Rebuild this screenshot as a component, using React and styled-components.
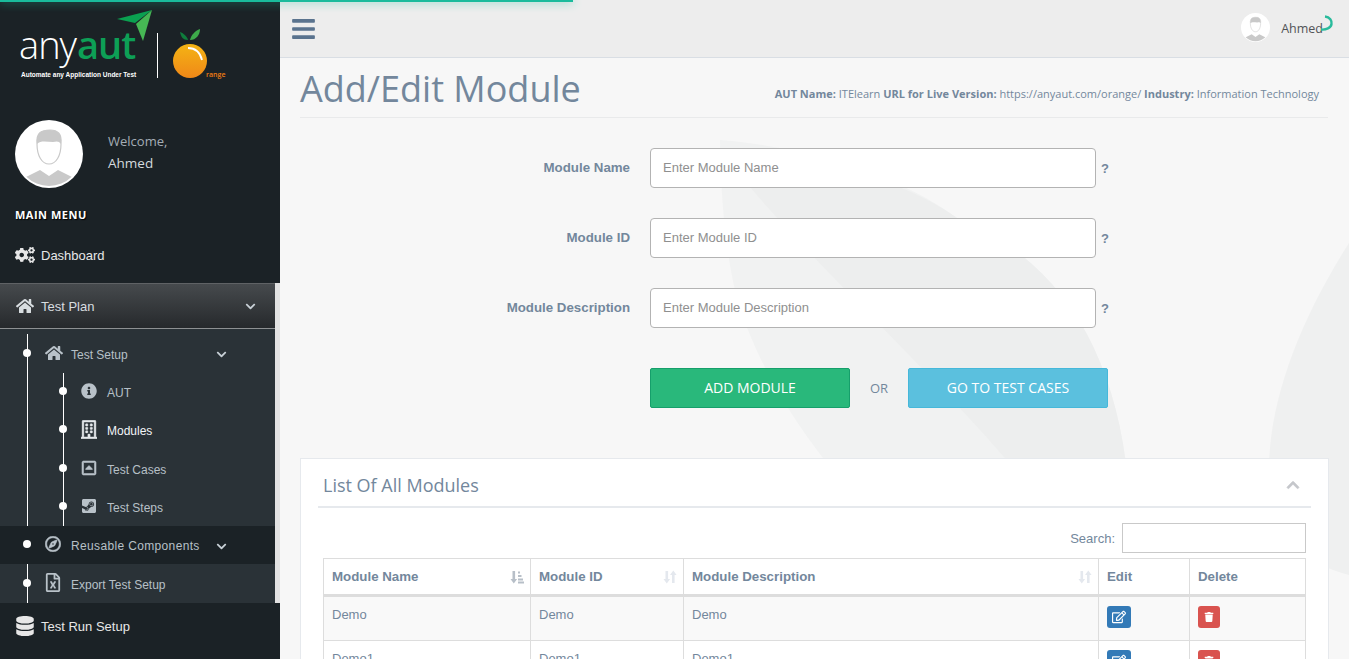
import React from 'react';
import styled, { createGlobalStyle } from 'styled-components';
import {
  FaBars, FaChevronDown, FaChevronUp, FaCogs, FaHome, FaInfoCircle, FaRegBuilding, FaRegCaretSquareUp,
  FaSteamSquare, FaRegCompass, FaRegFileExcel, FaDatabase, FaRegEdit, FaTrash,
} from 'react-icons/fa';

const GlobalStyle = createGlobalStyle`
  html, body { margin: 0; padding: 0; height: 100%; overflow: hidden; }
  body { font-family: "Liberation Sans", Arial, sans-serif; background: #f7f7f7; color: #73879c; }
  * { box-sizing: border-box; }
`;

const Page = styled.div`
  display: flex;
  width: 1349px;
  height: 659px;
  overflow: hidden;
  position: relative;
`;

const Progress = styled.div`
  position: absolute;
  left: 0;
  top: 0;
  width: 573px;
  height: 2px;
  background: #1abb9c;
  box-shadow: 0 0 10px #1abb9c;
  z-index: 5;
`;

const Sidebar = styled.aside`
  width: 280px;
  flex: none;
  background: #1b2226;
  display: flex;
  flex-direction: column;
`;

const LogoBox = styled.div`
  height: 100px;
  padding: 8px 0 0 18px;
`;

const Profile = styled.div`
  display: flex;
  align-items: flex-start;
  padding: 20px 0 0 15px;
  height: 101px;
`;

const WelcomeBox = styled.div`
  margin: 10px 0 0 25px;
  font-family: "Open Sans", sans-serif;
  font-size: 13px;
  line-height: 22px;
  color: #a4adb5;
  span { display: block; font-size: 13.5px; color: #d5dade; }
`;

const MenuTitle = styled.h3`
  margin: 0;
  height: 34px;
  padding: 6px 0 0 15px;
  font-family: "Open Sans", sans-serif;
  font-size: 11px;
  line-height: 15px;
  font-weight: 700;
  letter-spacing: 0.5px;
  color: #fff;
  text-shadow: 1px 1px 1px #000;
`;

const TopItem = styled.div`
  display: flex;
  align-items: center;
  height: ${p => p.$h || 48}px;
  padding: 0 0 ${p => p.$pb || 0}px 15px;
  font-size: 13px;
  color: #e7e7e7;
  svg { width: 20px; height: 20px; margin-right: 6px; flex: none; }
`;

const OpenGroup = styled.div`
  width: 280px;
  background: #e2e2e2;
  padding-right: 5px;
`;

const GroupHead = styled.div`
  display: flex;
  align-items: center;
  height: 46px;
  padding: 0 19px 0 16px;
  font-size: 13px;
  color: #d8dde0;
  background: linear-gradient(#464a4d, #26292c);
  border-top: 1px solid #5f6265;
  border-bottom: 1px solid #8d9092;
  svg:first-child { width: 18px; height: 18px; margin-right: 7px; }
`;

const Chevron = styled(FaChevronDown)`
  width: 11px;
  height: 11px;
  margin-left: auto;
  color: #c8d0d6;
`;

const ChildList = styled.div`
  background: #2a3237;
  padding-top: 5px;
  position: relative;
  &::before {
    content: "";
    position: absolute;
    left: 27px;
    top: 5px;
    bottom: 0;
    width: 1px;
    background: #fff;
  }
`;

const Row = styled.div`
  display: flex;
  align-items: center;
  position: relative;
  height: ${p => p.$h || 38.25}px;
  padding-top: 2px;
  padding-left: ${p => (p.$deep ? 81 : 45)}px;
  padding-right: 48px;
  font-size: 12px;
  letter-spacing: ${p => (p.$spread ? 0.35 : 0)}px;
  color: ${p => (p.$active ? '#f2f5f7' : '#b7c0c7')};
  background: ${p => (p.$dark ? '#1b2226' : 'transparent')};
  &::before {
    content: "";
    position: absolute;
    left: ${p => (p.$deep ? 59 : 23)}px;
    top: 50%;
    margin-top: -5px;
    width: 8px;
    height: 8px;
    border-radius: 50%;
    background: #fff;
  }
`;

const RowIcon = styled.span`
  display: flex;
  align-items: center;
  width: 26px;
  flex: none;
  margin-top: -4px;
  svg {
    width: ${p => p.$w || 16}px;
    height: ${p => p.$size || 16}px;
    color: ${p => (p.$bright ? '#e6eaed' : '#b9c2c9')};
    stroke: currentColor;
    stroke-width: ${p => p.$stroke || 0}px;
  }
`;

const DeepList = styled.div`
  position: relative;
  &::before {
    content: "";
    position: absolute;
    left: 63px;
    top: 0;
    bottom: 0;
    width: 1px;
    background: #fff;
  }
`;

const Main = styled.main`
  flex: 1;
  min-width: 0;
  position: relative;
  display: flex;
  flex-direction: column;
`;

const Leaves = styled.svg`
  position: absolute;
  left: 0;
  top: 0;
  width: 1069px;
  height: 659px;
`;

const TopBar = styled.header`
  position: relative;
  display: flex;
  align-items: center;
  justify-content: space-between;
  height: 58px;
  flex: none;
  padding: 0 15px 0 12px;
  background: #ededed;
  border-bottom: 1px solid #d9dee4;
  svg.burger { width: 23px; height: 26px; color: #5a738e; }
`;

const UserBox = styled.div`
  position: relative;
  display: flex;
  align-items: center;
  gap: 11px;
  margin-top: -2px;
  padding-right: 11px;
  font-family: "Open Sans", sans-serif;
  font-size: 12.5px;
  color: #515356;
  span { margin-top: 2px; }
`;

const Spinner = styled.svg`
  position: absolute;
  right: 0;
  top: 2px;
  width: 14px;
  height: 18px;
`;

const Content = styled.div`
  position: relative;
  padding: 0 21px 0 20px;
`;

const TitleRow = styled.div`
  display: flex;
  align-items: flex-end;
  justify-content: space-between;
  height: 60px;
  padding: 0 9px 16px 0;
  border-bottom: 1px solid #e9eaeb;
`;

const Title = styled.h1`
  margin: 0 0 -12px;
  font-family: "Open Sans", sans-serif;
  font-size: 36px;
  line-height: 49px;
  font-weight: 400;
  color: #73879c;
`;

const AutInfo = styled.div`
  font-family: "Open Sans", sans-serif;
  font-size: 11px;
  line-height: 15px;
  b { font-weight: 700; }
`;

const Form = styled.form`
  display: flex;
  flex-direction: column;
  gap: 30px;
  padding-top: 30px;
`;

const FormRow = styled.div`
  display: flex;
  align-items: center;
  height: 40px;
`;

const Label = styled.label`
  width: 350px;
  padding: 0 20px 1px 0;
  text-align: right;
  font-size: 13.3px;
  font-weight: 700;
`;

const Input = styled.input`
  width: 446px;
  height: 40px;
  padding: 0 12px 2px;
  border: 1px solid #b3b3b3;
  border-radius: 4px;
  background: #fff;
  font-family: "Liberation Sans", sans-serif;
  font-size: 13px;
  &::placeholder { color: #8f8f8f; opacity: 1; }
`;

const Help = styled.span`
  margin-left: 5px;
  font-size: 13px;
  font-weight: 700;
`;

const Actions = styled.div`
  display: flex;
  align-items: center;
  height: 40px;
  margin: 40px 0 0 350px;
`;

const Button = styled.button`
  width: 200px;
  height: 40px;
  padding-bottom: 2px;
  border: 1px solid ${p => p.$border};
  border-radius: 2px;
  background: ${p => p.$bg};
  color: #fff;
  font-family: "Open Sans", sans-serif;
  font-size: 14px;
`;

const Or = styled.span`
  width: 58px;
  text-align: center;
  font-family: "Open Sans", sans-serif;
  font-size: 13px;
`;

const Panel = styled.section`
  margin-top: 50px;
  width: 1029px;
  padding: 0 17px;
  background: #fff;
  border: 1px solid #e6e9ed;
`;

const PanelHead = styled.div`
  display: flex;
  align-items: center;
  justify-content: space-between;
  height: 49px;
  padding: 4px 11px 0 5px;
  border-bottom: 2px solid #e6e9ed;
  h2 { margin: 0; font-family: "Open Sans", sans-serif; font-size: 18px; font-weight: 400; }
  svg { width: 14px; height: 14px; color: #c5c7cb; stroke: currentColor; stroke-width: 24px; }
`;

const SearchRow = styled.div`
  display: flex;
  justify-content: flex-end;
  align-items: center;
  gap: 7px;
  height: 30px;
  margin: 15px 5px 5px 0;
  font-size: 13px;
  input { width: 184px; height: 30px; border: 1px solid #c9c9c9; background: #fff; }
`;

const Table = styled.table`
  width: 982px;
  margin-left: 5px;
  border-collapse: collapse;
  table-layout: fixed;
  font-size: 13px;
  th, td { border: 1px solid #ddd; padding: 0 8px; text-align: left; }
  th { height: 37px; font-size: 13.3px; font-weight: 700; border-bottom: 3px solid #ddd; position: relative; }
  td { height: 45px; padding-bottom: 9px; }
  tbody tr:nth-child(odd) td { background: #f9f9f9; }
`;

const SortIcon = styled.svg`
  position: absolute;
  right: 6px;
  top: 11px;
  width: 14px;
  height: 14px;
  color: ${p => (p.$on ? '#b7bfc8' : '#e4e8ee')};
`;

const ActionBtn = styled.span`
  display: inline-flex;
  align-items: center;
  justify-content: center;
  width: ${p => p.$w}px;
  height: 22px;
  margin-top: 5px;
  vertical-align: top;
  border-radius: 3px;
  color: #fff;
  background: ${p => p.$bg};
  svg { width: ${p => p.$icon}px; height: ${p => p.$icon}px; }
`;

const Avatar = ({ size }) => (
  <svg width={size} height={size} viewBox="0 0 68 68">
    <circle cx="34" cy="34" r="34" fill="#fff" />
    <clipPath id={`av${size}`}><circle cx="34" cy="34" r="32" /></clipPath>
    <g clipPath={`url(#av${size})`}>
      <path d="M9 58 L25 50 L34 56 L43 50 L59 58 V70 H9Z" fill="#c9c9c9" />
      <path d="M22 24 C21 12 27 10 35 10 C43 10 47 14 46 24 C46 36 41 44 34 44 C27 44 22 36 22 24Z" fill="#fff" stroke="#c9c9c9" strokeWidth="1.2" />
      <path d="M22 24 C21 12 27 10 35 10 C43 10 47 14 46 24 C44 21 42 21 38 22 C32 22 26 20 22 24Z" fill="#c9c9c9" />
    </g>
  </svg>
);

const Logo = () => (
  <svg width="225" height="80" viewBox="0 0 225 80">
    <defs>
      <linearGradient id="orange" x1="0" y1="0" x2="0" y2="1">
        <stop offset="0" stopColor="#f4b414" />
        <stop offset="1" stopColor="#f08818" />
      </linearGradient>
    </defs>
    <text x="1" y="51" fontFamily="Open Sans, sans-serif" fontWeight="300" fontSize="38" fill="#fff" letterSpacing="-1">any</text>
    <text x="59" y="51" fontFamily="Open Sans, sans-serif" fontWeight="600" fontSize="38" fill="#0d9f56" letterSpacing="-1">aut</text>
    <text x="3" y="69" fontFamily="Liberation Sans, sans-serif" fontWeight="700" fontSize="6.5" fill="#fff">Automate any Application Under Test</text>
    <polygon points="99,11 134,2 117,15" fill="#0aa050" />
    <polygon points="134,2 125,33 118,16" fill="#46b754" />
    <rect x="139" y="25" width="1" height="45" fill="#fff" />
    <circle cx="172" cy="53" r="17" fill="url(#orange)" />
    <path d="M170 40 C177 40 182 44 184 52" fill="none" stroke="#fff" strokeWidth="1.8" />
    <path d="M162 24 C165 25 169 28 170 32 C165 32 163 29 162 24Z" fill="#0f7d3c" />
    <path d="M182 21 C182 27 178 32 172 32 C173 27 177 23 182 21Z" fill="#3da94a" />
    <text x="188" y="69" fontFamily="Open Sans, sans-serif" fontWeight="600" fontSize="7" fill="#f07d12">range</text>
  </svg>
);

const SortArrows = ({ on }) => (
  <SortIcon viewBox="0 0 14 14" $on={on} fill="currentColor">
    <path d="M2.5 1h2.6v8h2L3.8 13.5.5 9h2z" />
    {on ? (
      <path d="M8 1.5h2v2H8zM8 5h3.5v2H8zM8 8.5h5v2H8zM8 11.5h6v2H8z" />
    ) : (
      <path d="M9 13h2.6V5h2L10.3.5 7 5h2z" />
    )}
  </SortIcon>
);

const rows = ['Demo', 'Demo1'];

export default function App() {
  return (
    <>
      <GlobalStyle />
      <Page>
        <Progress />
        <Sidebar>
          <LogoBox><Logo /></LogoBox>
          <Profile>
            <Avatar size={68} />
            <WelcomeBox>Welcome,<span>Ahmed</span></WelcomeBox>
          </Profile>
          <MenuTitle>MAIN MENU</MenuTitle>
          <TopItem $pb={8}><FaCogs />Dashboard</TopItem>
          <OpenGroup>
            <GroupHead><FaHome />Test Plan<Chevron /></GroupHead>
            <ChildList>
              <Row $h={39}><RowIcon $w={18}><FaHome /></RowIcon>Test Setup<Chevron /></Row>
              <DeepList>
                <Row $deep><RowIcon><FaInfoCircle /></RowIcon>AUT</Row>
                <Row $deep $active><RowIcon $w={16} $size={19} $bright $stroke={12}><FaRegBuilding /></RowIcon>Modules</Row>
                <Row $deep><RowIcon $stroke={18}><FaRegCaretSquareUp /></RowIcon>Test Cases</Row>
                <Row $deep><RowIcon><FaSteamSquare /></RowIcon>Test Steps</Row>
              </DeepList>
              <Row $dark $h={38} $spread><RowIcon $stroke={18}><FaRegCompass /></RowIcon>Reusable Components<Chevron /></Row>
              <Row $h={39}><RowIcon $w={16} $size={19}><FaRegFileExcel /></RowIcon>Export Test Setup</Row>
            </ChildList>
          </OpenGroup>
          <TopItem $h={46}><FaDatabase />Test Run Setup</TopItem>
        </Sidebar>
        <Main>
          <Leaves viewBox="0 0 1069 659">
            <path d="M440 140 C441 220 450 290 468 330 C490 385 520 430 560 480 H848 C835 350 780 260 677 218 C640 190 560 150 440 140Z" fill="#f1f2f2" />
            <path d="M470 187 C540 270 680 400 743 480 H848 C835 350 780 260 677 218 C640 190 560 160 470 150Z" fill="#edeeee" />
            <path d="M1069 243 C1020 320 989 400 989 470 C989 520 1010 560 1069 575Z" fill="#eff0f0" />
          </Leaves>
          <TopBar>
            <FaBars className="burger" />
            <UserBox>
              <Avatar size={29} />
              <span>Ahmed</span>
              <Spinner viewBox="0 0 14 18">
                <path d="M5 1.5 C10 2 12 6 11.5 9 C11 13 6 15 1 14.5" fill="none" stroke="#29bb9c" strokeWidth="2.4" />
              </Spinner>
            </UserBox>
          </TopBar>
          <Content>
            <TitleRow>
              <Title>Add/Edit Module</Title>
              <AutInfo>
                <b>AUT Name:</b> ITElearn <b>URL for Live Version:</b> https://anyaut.com/orange/ <b>Industry:</b> Information Technology
              </AutInfo>
            </TitleRow>
            <Form>
              <FormRow><Label>Module Name</Label><Input placeholder="Enter Module Name" /><Help>?</Help></FormRow>
              <FormRow><Label>Module ID</Label><Input placeholder="Enter Module ID" /><Help>?</Help></FormRow>
              <FormRow><Label>Module Description</Label><Input placeholder="Enter Module Description" /><Help>?</Help></FormRow>
            </Form>
            <Actions>
              <Button type="button" $bg="#29b87b" $border="#169f6b">ADD MODULE</Button>
              <Or>OR</Or>
              <Button type="button" $bg="#5bc0de" $border="#46b8da">GO TO TEST CASES</Button>
            </Actions>
            <Panel>
              <PanelHead><h2>List Of All Modules</h2><FaChevronUp /></PanelHead>
              <SearchRow>Search:<input /></SearchRow>
              <Table>
                <colgroup>
                  <col width="207" /><col width="153" /><col width="415" /><col width="91" /><col width="116" />
                </colgroup>
                <thead>
                  <tr>
                    <th>Module Name<SortArrows on /></th>
                    <th>Module ID<SortArrows /></th>
                    <th>Module Description<SortArrows /></th>
                    <th>Edit</th>
                    <th>Delete</th>
                  </tr>
                </thead>
                <tbody>
                  {rows.map(name => (
                    <tr key={name}>
                      <td>{name}</td>
                      <td>{name}</td>
                      <td>{name}</td>
                      <td><ActionBtn $w={24} $icon={14} $bg="#337ab7"><FaRegEdit /></ActionBtn></td>
                      <td><ActionBtn $w={22} $icon={10} $bg="#d9534f"><FaTrash /></ActionBtn></td>
                    </tr>
                  ))}
                </tbody>
              </Table>
            </Panel>
          </Content>
        </Main>
      </Page>
    </>
  );
}
